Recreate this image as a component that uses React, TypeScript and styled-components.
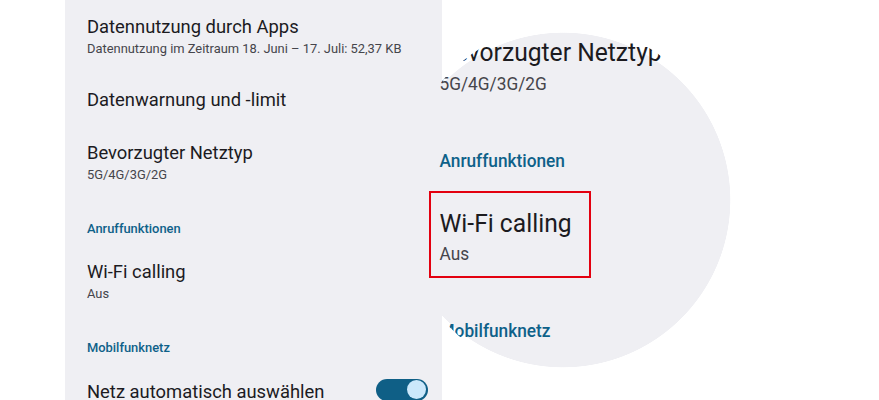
import React from 'react'
import styled, { createGlobalStyle } from 'styled-components'

const GlobalStyle = createGlobalStyle`
  body {
    margin: 0;
    background: #ffffff;
    font-family: Roboto, "Noto Sans", sans-serif;
  }
`

const Stage = styled.div`
  position: relative;
  width: 879px;
  height: 400px;
  overflow: hidden;
  display: flex;
  background: #ffffff;
`

const Panel = styled.div`
  margin-left: 65px;
  width: 377px;
  height: 400px;
  background: #efeff3;
`

const List = styled.div`
  display: flex;
  flex-direction: column;
  padding: 0 14px 0 22px;
`

const Item = styled.div`
  display: flex;
  align-items: center;
  justify-content: space-between;
  padding: 15.5px 0;
`

const ItemText = styled.div`
  display: flex;
  flex-direction: column;
`

const Title = styled.div`
  font-size: 18.4px;
  line-height: 22px;
  color: #1c1b1f;
  white-space: nowrap;
`

const Summary = styled.div`
  margin-top: 2px;
  font-size: 12.9px;
  line-height: 18px;
  color: #45454b;
  white-space: nowrap;
`

const Category = styled.div`
  padding: 20.5px 0 8px;
  font-size: 12.9px;
  line-height: 18px;
  font-weight: 500;
  color: #0e6189;
`

const Track = styled.div<{ on: boolean }>`
  width: 52px;
  height: 22px;
  border-radius: 11px;
  background: ${p => (p.on ? '#0f5f86' : '#8e9099')};
  display: flex;
  align-items: center;
  justify-content: ${p => (p.on ? 'flex-end' : 'flex-start')};
  padding: 0 2px;
  box-sizing: border-box;
  margin-top: -4px;
`

const Thumb = styled.div`
  width: 19px;
  height: 19px;
  border-radius: 50%;
  background: #cbe8fb;
`

// gray disc r=167; the zoomed content is cut by a slightly taller ellipse
const Magnifier = styled.div`
  position: absolute;
  left: 392px;
  top: 29px;
  width: 342px;
  height: 342px;
  clip-path: ellipse(167px 176px at 173px 171px);
  background: radial-gradient(circle at 50% 50%, #efeff3 167px, transparent 167.6px);
`

const Lens = styled.div`
  position: absolute;
  left: 18px;
  top: -195px;
  width: 377px;
  transform-origin: 0 0;
  transform: scale(1.34, 1.43);
`

const Highlight = styled.div`
  position: absolute;
  left: 429px;
  top: 191px;
  width: 162px;
  height: 87px;
  box-sizing: border-box;
  border: 2px solid #e3000f;
`

type Row =
  | { kind: 'category'; text: string }
  | { kind: 'item'; title: string; summary?: string; toggle?: boolean }

const rows: Row[] = [
  { kind: 'item', title: 'Datennutzung durch Apps', summary: 'Datennutzung im Zeitraum 18. Juni – 17. Juli: 52,37 KB' },
  { kind: 'item', title: 'Datenwarnung und -limit' },
  { kind: 'item', title: 'Bevorzugter Netztyp', summary: '5G/4G/3G/2G' },
  { kind: 'category', text: 'Anruffunktionen' },
  { kind: 'item', title: 'Wi-Fi calling', summary: 'Aus' },
  { kind: 'category', text: 'Mobilfunknetz' },
  { kind: 'item', title: 'Netz automatisch auswählen', toggle: true },
]

const SettingsList = () => (
  <List>
    {rows.map((row, i) =>
      row.kind === 'category' ? (
        <Category key={i}>{row.text}</Category>
      ) : (
        <Item key={i}>
          <ItemText>
            <Title>{row.title}</Title>
            {row.summary && <Summary>{row.summary}</Summary>}
          </ItemText>
          {row.toggle !== undefined && (
            <Track on={row.toggle}>
              <Thumb />
            </Track>
          )}
        </Item>
      )
    )}
  </List>
)

const App = () => {
  return (
    <Stage>
      <GlobalStyle />
      <Panel>
        <SettingsList />
      </Panel>
      <Magnifier>
        <Lens>
          <SettingsList />
        </Lens>
      </Magnifier>
      <Highlight />
    </Stage>
  )
}

export default App
